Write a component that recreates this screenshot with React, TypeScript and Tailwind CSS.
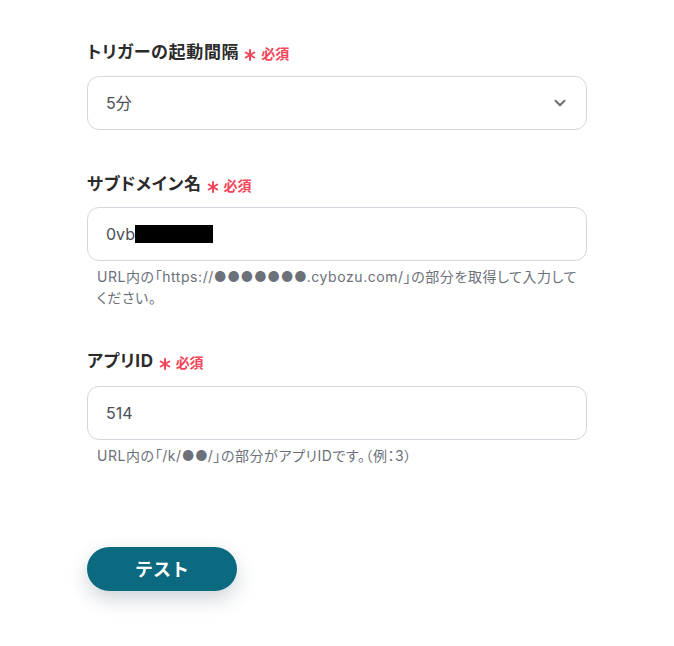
import { ChevronDown } from "lucide-react";

function Label({ text }: { text: string }) {
  return (
    <div className="flex items-center h-6">
      <span className="text-[17px] font-bold text-[#2b2b2b] tracking-[0.04em] [font-feature-settings:'palt']">
        {text}
      </span>
      <svg className="ml-[5px] mt-[3px]" width="12" height="12" viewBox="0 0 12 12">
        <g stroke="#f2465b" strokeWidth="2" strokeLinecap="round">
          <line x1="6" y1="1" x2="6" y2="11" />
          <line x1="1.7" y1="3.5" x2="10.3" y2="8.5" />
          <line x1="1.7" y1="8.5" x2="10.3" y2="3.5" />
        </g>
      </svg>
      <span className="ml-[5px] text-[14px] font-bold text-[#f2465b]">必須</span>
    </div>
  );
}

export default function App() {
  return (
    <div
      className="min-h-screen bg-white pt-[41px] pl-[87px]"
      style={{ fontFamily: '"Inter", "Noto Sans CJK JP", sans-serif' }}
    >
      <div className="w-[500px]">
        <Label text="トリガーの起動間隔" />
        <div className="mt-[11px] h-[54px] rounded-xl border border-[#d3d6dc] flex items-center justify-between pl-[18px] pr-[17px]">
          <span className="text-[16px] text-[#4a4f57]">5分</span>
          <ChevronDown size={18} strokeWidth={2.75} className="text-[#6b6f76]" />
        </div>

        <div className="mt-[43px]">
          <Label text="サブドメイン名" />
          <div className="mt-[10px] h-[54px] rounded-xl border border-[#d3d6dc] flex items-center pl-[18px]">
            <span className="text-[16px] text-[#4a4f57]">0vb</span>
            <span className="inline-block w-[78px] h-[18px] bg-black" />
          </div>
          <p className="mt-[5px] pl-[10px] pr-[2px] text-[14px] leading-[21px] tracking-[0.04em] text-[#6b7079] [font-feature-settings:'palt']">
            URL内の「https://●●●●●●●.cybozu.com/」の部分を取得して入力してください。
          </p>
        </div>

        <div className="mt-[42px]">
          <Label text="アプリID" />
          <div className="mt-[12px] h-[54px] rounded-xl border border-[#d3d6dc] flex items-center pl-[18px]">
            <span className="text-[16px] text-[#4a4f57]">514</span>
          </div>
          <p className="mt-[5px] pl-[10px] text-[14px] leading-[21px] tracking-[0.04em] text-[#6b7079] [font-feature-settings:'palt']">
            URL内の「/k/●●/」の部分がアプリIDです。（例：3）
          </p>
        </div>

        <button className="mt-[81px] w-[150px] h-[44px] rounded-full bg-[#0c6a80] text-white text-[18px] font-bold shadow-[0_8px_20px_rgba(15,40,60,0.2)]">
          テスト
        </button>
      </div>
    </div>
  );
}
